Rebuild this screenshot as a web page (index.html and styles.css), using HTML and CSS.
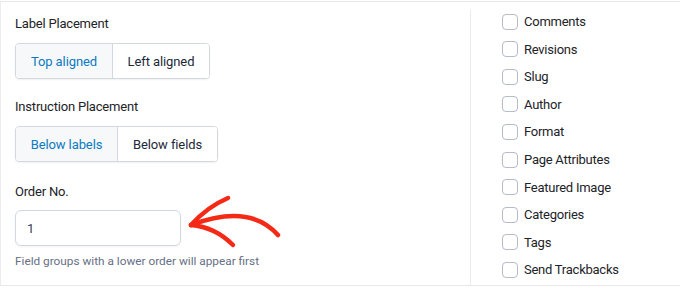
FILE: index.html
```html
<!DOCTYPE html>
<html>
<head>
<meta charset="utf-8">
<link rel="stylesheet" href="styles.css">
</head>
<body>
<div class="frame">
  <div class="left">
    <div class="field">
      <div class="label">Label Placement</div>
      <div class="group">
        <div class="seg active">Top aligned</div>
        <div class="seg">Left aligned</div>
      </div>
    </div>
    <div class="field">
      <div class="label">Instruction Placement</div>
      <div class="group">
        <div class="seg active wide1">Below labels</div>
        <div class="seg wide2">Below fields</div>
      </div>
    </div>
    <div class="field order">
      <div class="label">Order No.</div>
      <div class="input">1</div>
      <div class="help">Field groups with a lower order will appear first</div>
      <svg class="arrow" width="110" height="60" viewBox="180 195 110 60">
        <g fill="none" stroke="#f42a17" stroke-width="4.5" stroke-linecap="round" stroke-linejoin="round">
          <path d="M191,228 Q207,210 228,201"/>
          <path d="M191,228 Q215,230 233,248"/>
          <path d="M191,228 Q250,206 278,238"/>
        </g>
      </svg>
    </div>
  </div>
  <div class="right">
    <ul class="checks">
      <li><span class="box"></span>Comments</li>
      <li><span class="box"></span>Revisions</li>
      <li><span class="box"></span>Slug</li>
      <li><span class="box"></span>Author</li>
      <li><span class="box"></span>Format</li>
      <li><span class="box"></span>Page Attributes</li>
      <li><span class="box"></span>Featured Image</li>
      <li><span class="box"></span>Categories</li>
      <li><span class="box"></span>Tags</li>
      <li><span class="box"></span>Send Trackbacks</li>
    </ul>
  </div>
</div>
</body>
</html>
```
FILE: styles.css
```css
html, body {
  margin: 0;
  padding: 0;
  background: #ffffff;
}
body {
  font-family: Roboto, "Noto Sans", sans-serif;
  color: #1d2327;
  font-size: 13px;
}
.frame {
  margin-top: 1px;
  width: 700px;
  height: 283px;
  border-top: 1px solid #e8e8ea;
  border-left: 1px solid #ececee;
  border-bottom: 1px solid #e8e8ea;
  display: flex;
}
.left {
  width: 469px;
  padding-left: 14px;
  box-sizing: border-box;
}
.field {
  display: flex;
  flex-direction: column;
  align-items: flex-start;
}
.field:first-child { padding-top: 14px; }
.field + .field { margin-top: 20px; }
.label {
  font-size: 13px;
  line-height: 16px;
  color: #1d2327;
  letter-spacing: -0.2px;
}
.group {
  margin-top: 11px;
  display: flex;
  border: 1px solid #d3d7de;
  border-radius: 4px;
  height: 34px;
  box-shadow: 0 1px 2px rgba(16,24,40,0.06);
  overflow: hidden;
}
.seg {
  display: flex;
  align-items: center;
  justify-content: center;
  width: 96px;
  font-size: 13px;
  color: #1d2939;
  background: #ffffff;
  letter-spacing: -0.1px;
}
.seg + .seg { border-left: 1px solid #d3d7de; }
.seg.active {
  background: #f7f8fa;
  color: #0b7bc1;
}
.seg.wide1 { width: 101px; }
.seg.wide2 { width: 99px; }
.order { position: relative; }
.field.order { margin-top: 22px; }
.input {
  margin-top: 10px;
  border: 1px solid #d3d7de;
  border-radius: 6px;
  display: flex;
  align-items: center;
  padding-left: 11px;
  box-sizing: border-box;
  width: 166px;
  height: 36px;
  font-size: 13px;
  color: #344054;
  box-shadow: 0 1px 2px rgba(16,24,40,0.05);
}
.help {
  margin-top: 8px;
  font-size: 11.8px;
  color: #667085;
}
.arrow {
  position: absolute;
  left: 165px;
  top: 8px;
}
.right {
  margin-top: 8px;
  flex: 1;
  border-left: 1px solid #ececee;
}
.checks {
  list-style: none;
  margin: -2px 0 0 0;
  padding: 0 0 0 31px;
}
.checks li {
  display: flex;
  align-items: center;
  height: 27.56px;
  font-size: 13px;
  color: #1d2327;
  letter-spacing: -0.25px;
}
.box {
  border: 1px solid #b4bcc8;
  border-radius: 4px;
  margin-right: 6px;
  box-sizing: border-box;
  width: 16px;
  height: 16px;
}
```
